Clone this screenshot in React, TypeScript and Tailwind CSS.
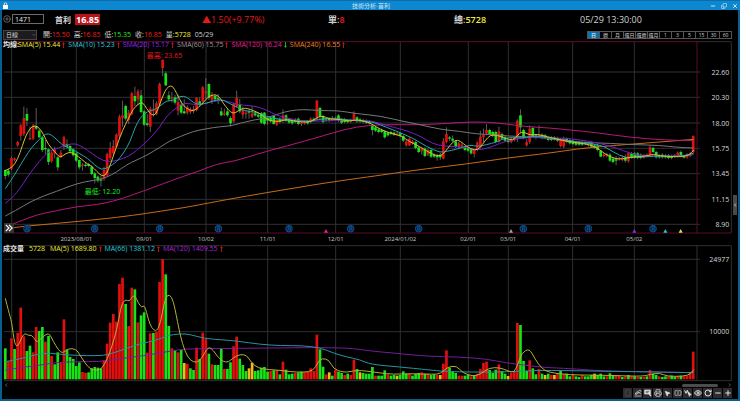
import React from "react";
import {
  ChevronDown,
  CirclePlus,
  Copy,
  Eye,
  Minus,
  MousePointer2,
  Plus,
  Printer,
  RotateCw,
  SquareSplitHorizontal,
  X,
} from "lucide-react";

const STEP = 9.254;
const FIRST = 16;
const VOLUME_BASE = 433;

// colour + [high, top, bottom, low], or colour + [top, bottom] for short wicks
const CANDLES = `
g358,360,378,388 g355,362,374,380 r324,356 r326,330 r276,286 r222,226,258,272 r170,204,252,258 g174,192,212,228
r230,264,268,270 r222,226,266,270 g174,228,236,240 g236,242,262,265 g260,262,300,306 g270,294,298,312 g296,298,336,345
r308,334 r290,298,310,325 g318,322,352,362 r300,308,322,324 r258,262,290,300 g268,282,290,296 g288,304 g298,316
g310,332 g328,330,352,358 r340,344,348,362 g336,344,347,352 g342,348 g350,372 g366,370,384,400 g376,380,392,398
g376,388,392,410 r350,360,386,392 r308,312,376,380 r276,294,324,330 r270,288,310,316 r254,290 r194,200,258,264
r152,196,204,230 g164,168,206,212 r180,188,210,222 r126,130,192,196 g110,138,154,168 r118,124,148,166 g120,136,186,190
g180,184,224,228 g192,220,225,230 r170,176,230,246 r148,180,184,200 r154,160,192,196 r98,102,164,168 r28,30,54,78
g64,70,106,108 g124,136,148,154 r126,142,146,158 g134,142,158,164 r134,156,182,196 g152,164,188,192 g148,184,190,192
r166,172,188,194 r172,180,186,192 r168,178,184,190 r142,144,180,184 g142,154,164,170 r108,112,154,160 r84,124,130,150
g100,102,144,150 r126,134,152,162 g132,138,148,156 g132,145,148,162 g172,184,196,198 r176,190,194,198 g174,184,196,200
g198,204,220,230 r158,162,214,218 r122,144,170,172 g146,162,184,190 r170,180,194,206 r180,188,191,206 g176,184,188,206
r168,190,200,204 g190,196 g194,200 g190,218 g186,188,222,226 g200,204,212,224 g204,214 g196,198,222,224 r210,224
g206,216 r178,196,212,218 g192,196,212,216 g208,218 g210,220 g204,212,216,220 g206,222 r214,218,222,228 r216,220
g214,220 r206,216 g206,210 r150,152,206,210 g170,174,200,208 g198,216 g208,212 g206,212 r198,206,210,214 r204,208
g196,212 g210,218 g208,216 g212,216 g210,214 r184,190,210,214 g202,214 g208,214 g210,216 g212,218 g214,220
g222,226,240,256 g232,242 g238,246 g240,246 g244,262 g248,256 g246,252 g248,254 r250,254 g250,258 g258,272 r274,286
r262,266,286,288 r274,280 g276,294 g292,306 r292,296,304,314 g296,318 r300,314 g300,320 g314,320 g312,316,322,332
g308,314,322,330 r264,274,326,328 r232,252,276,280 g258,262,266,274 g256,266,272,278 g274,290 r280,290 r284,290
g292,300 g294,302 g298,310 r298,300,312,322 r278,300 r242,260,292,294 r236,254,262,276 r222,240,250,256 g240,252
g246,258 g246,276 r230,244,276,278 g252,266 g262,272 g270,276 r266,276 r264,270 r208,212,262,276 g178,196,232,250
g240,264 r268,276,286,290 r226,236,276,282 g234,260 g256,264 r226,254,258,262 g254,264 g256,264 g262,270
g262,270 g262,268 g264,272 r268,288 r264,290 g266,276 g270,280 g272,282 g276,284 g276,284 g276,284 g276,282 r280,286
g278,290 g286,292 g286,300 g300,302,320,322 r314,318 r312,318 g314,332 g326,336 g318,328,332,346 r324,328
r316,326,330,334 g314,322,332,338 r310,334 g310,322 g310,322 g310,324 g314,324 r316,322 r314,318 r286,292,316,318
g294,306 g306,322 g316,322 g314,322 g316,322 g316,324 g318,324 r316,320 r304,308,320,322 g306,318 g319,322 r314,322
r310,318 r256,258,306,310`;

// colour + top of the bar
const VOLUMES = `
g340 r378 r310 g342 r294 r218 r304 g348 g332 r352 r276 g288 g276 r320 g303 r363 g388 g352 r382 r253 g343 g366 g372
g393 g382 r411 r414 g412 g400 g396 g398 g400 r376 r326 r263 r237 r260 r147 r128 g207 r273 r158 g163 r262 g241 g232
r353 r295 g294 r290 r141 r72 g118 g273 r340 g345 r352 g345 y384 r387 g400 g405 r338 g372 r293 r312 g356 r388 g390
g390 g340 r402 g402 g382 r334 r305 g371 g390 g408 y400 y383 g408 g406 g398 g396 g410 r408 g406 r406 g418 r380 g404
g418 g416 r414 g412 g410 r412 r410 r400 r408 r299 g343 g395 r418 y412 g422 r405 g410 g414 r420 g416 r420 r374 g402
y412 g414 g416 g416 g396 r422 g422 g422 g406 r418 g422 g420 y422 g420 g409 g416 r416 g422 g416 g414 r412 g416 r416
g420 g418 r420 y420 r386 r346 g398 g411 g414 r422 r422 g422 g420 r424 g420 r416 r402 r384 r380 g405 g414 g404 r388
g408 g416 y423 r414 r410 r264 g270 g378 g408 r376 g400 g418 r402 g416 y420 g416 r420 y420 r416 g408 r418 g416 g424
r418 g424 g426 r420 g424 g424 g420 y416 g420 g416 g424 r424 g415 g420 r420 r422 g426 r424 g420 r424 g424 r426 g426
r426 g424 r405 g416 g420 r424 g426 g424 r424 g422 g426 r424 g422 r424 r422 r414 r350`;

const PRICE_LINES = [
  {
    color: "#c96c18",
    points:
      "16,536 60,530 150,522 300,508 400,496 480,484 570,470 620,460 740,438 860,418 980,398 1110,380 1180,370 1280,356 1400,342 1520,324 1650,309 1730,297 1800,290 1900,282 1980,276 2081,268",
  },
  {
    color: "#b8187a",
    points:
      "16,530 60,514 110,494 170,482 230,470 290,464 340,454 400,434 460,412 520,390 570,372 600,362 650,342 700,334 740,322 800,304 860,288 940,266 1000,248 1070,230 1140,224 1200,224 1280,224 1340,220 1410,216 1460,216 1520,222 1580,230 1650,234 1710,240 1790,248 1890,262 1990,270 2081,272",
  },
  {
    color: "#777777",
    points:
      "16,498 50,480 90,456 130,438 170,424 210,408 250,396 290,390 320,382 350,366 380,344 410,330 440,316 480,292 510,272 540,260 580,244 620,236 660,230 690,228 720,220 760,210 800,204 840,190 870,182 910,178 960,182 1010,182 1040,186 1080,192 1140,198 1200,212 1260,224 1320,238 1380,244 1430,252 1480,254 1520,258 1580,260 1640,264 1680,270 1730,276 1770,278 1830,280 1900,284 1980,286 2030,292 2081,294",
  },
  {
    color: "#7420c4",
    points:
      "16,460 40,440 60,416 80,384 105,350 130,320 150,302 175,294 200,284 225,280 250,292 275,310 310,334 340,334 370,326 400,310 420,292 450,266 480,230 500,198 530,172 555,158 580,164 610,162 640,154 670,150 700,160 730,166 765,168 800,180 830,196 860,204 900,212 940,214 980,212 1040,210 1110,212 1140,220 1180,232 1220,242 1260,258 1300,282 1330,288 1370,290 1410,294 1430,300 1460,296 1500,280 1530,270 1560,266 1590,262 1640,264 1690,264 1740,270 1780,276 1830,288 1870,302 1910,316 1950,318 2030,318 2081,314",
  },
  {
    color: "#26a4a8",
    points:
      "16,416 35,388 55,356 75,322 95,292 120,266 137,250 155,254 175,274 195,290 215,296 240,312 262,324 285,346 305,360 325,352 350,336 370,310 390,276 405,232 420,204 435,190 450,182 470,176 485,164 500,152 520,152 540,138 560,140 580,158 595,164 620,160 640,152 665,148 680,156 700,166 725,180 750,184 780,190 800,200 830,206 860,212 910,214 940,212 970,206 1010,204 1040,210 1110,214 1140,224 1180,240 1210,252 1245,268 1280,290 1320,308 1340,304 1370,298 1410,284 1430,290 1460,284 1490,276 1520,262 1550,264 1580,262 1610,258 1640,262 1680,268 1730,276 1780,282 1810,288 1840,306 1875,324 1920,322 1960,318 2010,320 2050,318 2081,310",
  },
  {
    color: "#d6bd3a",
    points:
      "16,362 30,356 45,342 60,310 75,262 90,234 105,226 118,234 130,252 145,284 165,306 180,324 195,312 210,306 225,312 245,328 262,342 275,348 290,364 305,378 318,376 332,342 350,288 368,240 385,206 400,176 415,162 428,156 440,176 455,196 468,194 480,160 495,122 505,110 517,106 530,130 545,160 560,176 580,184 595,172 610,158 625,140 640,134 655,136 670,160 685,180 700,192 715,182 730,174 745,176 760,182 780,190 800,208 820,214 840,214 860,208 880,212 905,216 925,216 940,212 955,200 970,198 990,208 1020,208 1050,214 1070,208 1110,218 1130,232 1155,244 1180,252 1205,258 1230,276 1260,290 1285,306 1305,316 1322,318 1335,306 1350,286 1365,270 1380,272 1400,290 1425,302 1440,294 1455,272 1472,254 1490,256 1510,262 1530,270 1545,268 1558,248 1572,246 1590,256 1610,252 1640,260 1690,272 1730,278 1770,284 1795,296 1815,312 1835,322 1855,328 1880,324 1910,320 1940,318 1960,312 1980,318 2020,320 2050,320 2070,314 2081,300",
  },
];

const VOLUME_LINES = [
  {
    color: "#741c9c",
    points:
      "16,406 60,398 110,392 170,382 230,380 300,380 340,374 400,366 460,358 520,346 570,341 740,340 890,338 990,338 1060,340 1110,348 1180,354 1280,364 1380,366 1460,372 1520,384 1620,396 1650,398 1730,402 1810,408 1930,410 2081,413",
  },
  {
    color: "#2893a3",
    points:
      "16,380 60,372 110,358 150,354 200,360 260,362 310,362 340,354 380,340 420,326 470,316 500,302 540,296 570,298 610,310 660,314 710,318 780,328 840,332 910,332 960,338 1000,354 1040,366 1080,374 1110,388 1200,396 1280,404 1340,410 1480,412 1560,408 1650,406 1770,408 1900,410 2081,413",
  },
  {
    color: "#b5b037",
    points:
      "16,190 26,230 35,260 44,330 55,334 65,306 75,294 85,302 95,300 105,314 112,322 125,308 147,292 160,320 175,344 187,356 205,340 228,342 240,360 255,384 270,402 290,406 305,402 322,372 335,336 350,286 362,220 370,200 378,194 388,200 398,182 406,184 415,204 425,218 434,210 445,254 455,280 470,290 482,262 492,205 502,178 515,184 525,220 540,300 555,350 570,376 590,384 605,370 625,334 640,346 655,368 670,380 685,382 700,368 720,358 740,360 755,384 775,400 810,404 840,406 870,410 910,412 940,408 955,380 965,370 987,374 1000,402 1030,412 1050,410 1070,406 1100,408 1140,414 1180,418 1230,416 1300,418 1322,416 1342,396 1370,392 1388,414 1420,424 1440,418 1468,398 1500,398 1525,408 1542,414 1555,384 1565,354 1588,340 1605,372 1625,400 1645,412 1710,420 1780,420 1850,422 1930,424 1950,418 1980,414 2000,424 2050,424 2070,418 2081,404",
  },
];

const MONTHS = [
  { x: 35, label: "" },
  { x: 229, label: "2023/08/01" },
  { x: 433, label: "09/01" },
  { x: 618, label: "10/02" },
  { x: 803, label: "11/01" },
  { x: 1007, label: "12/01" },
  { x: 1201, label: "2024/01/02" },
  { x: 1405, label: "02/01" },
  { x: 1525, label: "03/01" },
  { x: 1718, label: "04/01" },
  { x: 1903, label: "05/02" },
];

const PRICES = [
  { y: 66, label: "22.60" },
  { y: 142, label: "20.30" },
  { y: 219, label: "18.00" },
  { y: 295, label: "15.75" },
  { y: 371, label: "13.45" },
  { y: 448, label: "11.15" },
  { y: 523, label: "8.90" },
];

const REPORTS = [81, 284, 479, 655, 867, 1052, 1256, 1570, 1765, 1959];

const EVENTS = [
  { x: 978, color: "#e0259b" },
  { x: 1533, color: "#a0a0a0" },
  { x: 1903, color: "#9327d8" },
  { x: 1996, color: "#25c8d8" },
  { x: 2042, color: "#e8e337" },
];

const SMA = [
  { text: "SMA(5) 15.44", up: true, className: "text-[#f0eb38]" },
  { text: "SMA(10) 15.23", up: true, className: "text-[#28cbdb]" },
  { text: "SMA(20) 15.17", up: true, className: "text-[#9327ec]" },
  { text: "SMA(60) 15.75", up: true, className: "text-[#9c9c9c]" },
  { text: "SMA(120) 16.24", up: false, className: "text-[#e0209a]" },
  { text: "SMA(240) 16.55", up: true, className: "text-[#f0841e]" },
];

const VOLUME_MA = [
  { text: "MA(5) 1689.80", up: true, className: "text-[#f0eb38]" },
  { text: "MA(66) 1381.12", up: true, className: "text-[#28cbdb]" },
  { text: "MA(120) 1409.55", up: true, className: "text-[#ab26d8]" },
];

const QUOTES = [
  { label: "開", value: "15.50", className: "text-[#f01c1c]" },
  { label: "高", value: "16.85", className: "text-[#f01c1c]" },
  { label: "低", value: "15.35", className: "text-[#20ea20]" },
  { label: "收", value: "16.85", className: "text-[#f01c1c]" },
  { label: "量", value: "5728", className: "text-[#f0eb38]" },
];

const PERIODS = ["日", "週", "月", "還日", "還週", "還月", "1", "3", "5", "15", "30", "60"];

const FILL: Record<string, string> = {
  r: "#e30f0f",
  g: "#17e317",
  y: "#f2b81c",
};

const parse = (source: string) =>
  source
    .trim()
    .split(/\s+/)
    .map((item, i) => ({
      x: FIRST + i * STEP,
      color: item[0],
      values: item.slice(1).split(",").map(Number),
    }));

const smooth = (points: string) => {
  const p = points.split(" ").map((pair) => pair.split(",").map(Number));
  let d = `M${p[0][0]} ${p[0][1]}`;
  for (let i = 1; i < p.length - 1; i++) {
    const mx = (p[i][0] + p[i + 1][0]) / 2;
    const my = (p[i][1] + p[i + 1][1]) / 2;
    d += ` Q${p[i][0]} ${p[i][1]} ${mx} ${my}`;
  }
  const last = p[p.length - 1];
  return `${d} L${last[0]} ${last[1]}`;
};

const Candles = () => (
  <>
    {parse(CANDLES).map(({ x, color, values }) => {
      const [high, top, bottom, low] =
        values.length === 4
          ? values
          : [values[0] - 4, values[0], values[1], values[1] + 4];
      return (
        <g key={x}>
          <line x1={x} x2={x} y1={high} y2={low} stroke="#8a8a8a" strokeWidth="2" />
          <rect x={x - 4} y={top} width="8" height={Math.max(bottom - top, 4)} fill={FILL[color]} />
        </g>
      );
    })}
  </>
);

const Lines = ({ lines }: { lines: { color: string; points: string }[] }) => (
  <>
    {lines.map((line) => (
      <path key={line.color} d={smooth(line.points)} fill="none" stroke={line.color} strokeWidth="3" />
    ))}
  </>
);

const PriceChart = () => (
  <svg viewBox="6 -27 2208 612" className="block w-full" role="img" aria-label="SMA">
    <g stroke="#303030" strokeWidth="3">
      {PRICES.map(({ y }) => (
        <line key={y} x1="12" x2="2100" y1={y} y2={y} />
      ))}
      {MONTHS.map(({ x }) => (
        <line key={x} x1={x} x2={x} y1="-24" y2="549" />
      ))}
      <line x1="2194" x2="2194" y1="-24" y2="549" />
      <line x1="2094" x2="2194" y1="-25" y2="-25" />
    </g>
    <g stroke="#5a0d2c" strokeWidth="3">
      <line x1="12" x2="2094" y1="-25" y2="-25" />
      <line x1="12" x2="2194" y1="549" y2="549" />
      <line x1="2091" x2="2091" y1="-25" y2="549" />
    </g>
    <Candles />
    <Lines lines={PRICE_LINES} />
    {REPORTS.map((x) => (
      <g key={x}>
        <circle cx={x} cy="536" r="10" fill="#041a33" stroke="#0f529a" strokeWidth="3" />
        <path
          d={`M${x - 3} 530v9q0 3-2 4M${x - 3} 530h7v13M${x - 3} 534h7M${x - 3} 538h7`}
          fill="none"
          stroke="#1160ad"
          strokeWidth="2"
        />
      </g>
    ))}
    {EVENTS.map(({ x, color }) => (
      <path key={x} d={`M${x} 537l6 11h-12z`} fill={color} />
    ))}
    <g fontSize="21">
      <text x="440" y="24" fill="#e81a1a">最高: 23.65</text>
      <text x="254" y="433" fill="#20ea20">最低: 12.20</text>
      {PRICES.map(({ y, label }) => (
        <text key={y} x="2188" y={y + 8} textAnchor="end" fill="#d6d6d6">
          {label}
        </text>
      ))}
    </g>
    <g fontSize="18" fill="#c8c8c8" textAnchor="middle">
      {MONTHS.map(({ x, label }) => (
        <text key={x} x={x} y="573">
          {label}
        </text>
      ))}
    </g>
  </svg>
);

const VolumeChart = () => (
  <svg viewBox="6 30 2208 411" className="block w-full" role="img" aria-label="成交量">
    <g stroke="#303030" strokeWidth="3">
      <line x1="12" x2="2194" y1="32" y2="32" />
      <line x1="12" x2="2100" y1="73" y2="73" />
      <line x1="12" x2="2100" y1="290" y2="290" />
      <line x1="12" x2="2194" y1="437" y2="437" />
      {MONTHS.map(({ x }) => (
        <line key={x} x1={x} x2={x} y1="32" y2="437" />
      ))}
      <line x1="2091" x2="2091" y1="32" y2="437" />
      <line x1="2194" x2="2194" y1="32" y2="437" />
    </g>
    {parse(VOLUMES).map(({ x, color, values }) => (
      <rect key={x} x={x - 4} y={values[0]} width="8" height={VOLUME_BASE - values[0]} fill={FILL[color]} />
    ))}
    <Lines lines={VOLUME_LINES} />
    <g fontSize="21" fill="#d6d6d6" textAnchor="end">
      <text x="2188" y="81">24977</text>
      <text x="2188" y="298">10000</text>
    </g>
  </svg>
);

interface LegendProps {
  items: { text: string; up: boolean; className: string }[];
  children: React.ReactNode;
}

const Legend: React.FC<LegendProps> = ({ items, children }) => (
  <div className="absolute top-0 left-px flex h-2 items-center gap-[3px] whitespace-nowrap text-[7px] leading-[8px]">
    {children}
    {items.map(({ text, up, className }) => (
      <span key={text} className={`flex gap-0.5 ${className}`}>
        {text}
        <svg viewBox="0 0 3 8" className={`h-2 w-[3px] ${up ? "text-[#e01b1b]" : "rotate-180 text-[#1fd81f]"}`}>
          <path d="M1.5 7V2M.4 3.2 1.5 1.6l1.1 1.6" fill="none" stroke="currentColor" strokeWidth=".8" />
        </svg>
      </span>
    ))}
  </div>
);

const Chevron = ({ right = false }: { right?: boolean }) => (
  <svg viewBox="0 0 6 8" className={`h-1 w-[3px] ${right ? "rotate-180" : ""}`}>
    <path d="M4 1 1 4l3 3" fill="none" stroke="currentColor" strokeWidth="1.5" />
  </svg>
);

const TOOLS: { label: string; icon: React.ReactNode; drawn?: boolean }[] = [
  { label: "Page", drawn: true, icon: <path d="M5 3h9l4 4v14H5z" stroke="#555" /> },
  {
    label: "Draw",
    drawn: true,
    icon: <path d="M2 21h20M3 16c5-9 8-11 10-8s-3 8-7 8 1-4 6-5 8 5 10 4M13 7l5-4 3 4-5 5" />,
  },
  {
    label: "Table",
    drawn: true,
    icon: (
      <>
        <path d="M2 3h17v12H2z" fill="currentColor" />
        <path d="M5 7h11M5 11h8" stroke="#303030" />
        <path d="M15 14l6 7" strokeWidth="4" />
      </>
    ),
  },
  { label: "Print", icon: <Printer className="size-2" /> },
  { label: "Pointer", icon: <MousePointer2 className="size-[7px]" fill="currentColor" /> },
  { label: "Split", icon: <SquareSplitHorizontal className="size-2" /> },
  {
    label: "Select line",
    drawn: true,
    icon: (
      <>
        <path d="M2 4l4 9 4-9 4 12" strokeWidth="3" />
        <path d="M13 9l9 8-4 .5L16 22z" fill="currentColor" />
      </>
    ),
  },
  { label: "View", icon: <Eye className="size-2" strokeWidth={3} /> },
  { label: "Reload", icon: <RotateCw className="size-2" strokeWidth={3} /> },
  { label: "Zoom out", icon: <Minus className="size-2" strokeWidth={3} /> },
  { label: "Zoom in", icon: <Plus className="size-2" strokeWidth={3} /> },
];

const TitleBar = () => (
  <header className="grid h-[10px] grid-cols-3 items-center border-t border-[#0b6ea8] bg-[#0d87cf] pr-px pl-[3px] text-white">
    <svg viewBox="0 0 10 14" className="h-[7px] w-[5px]">
      <path d="M2.500 7V4a2.500 2.500 0 0 1 5 0v3" fill="none" stroke="currentColor" strokeWidth="1.500" />
      <rect y="6" width="10" height="8" fill="currentColor" />
    </svg>
    <h1 className="text-center text-[6px] leading-[8px] text-[#cfe6f5]">技術分析-首利</h1>
    <div className="flex justify-end gap-1">
      <button aria-label="Minimize">
        <Minus className="size-[6px]" strokeWidth={3} />
      </button>
      <button aria-label="Restore" className="mx-px">
        <Copy className="size-[6px] -scale-x-100 rotate-180" strokeWidth={2} />
      </button>
      <button aria-label="Close" className="mr-px">
        <X className="size-[6px]" strokeWidth={3} />
      </button>
    </div>
  </header>
);

const Summary = () => (
  <div className="grid h-[18px] grid-cols-[200px_1fr_1fr_1fr_1fr] items-center pr-8 text-[9px] leading-[11px] text-[#d0d0d0]">
    <div className="flex items-center">
      <button aria-label="Add" className="ml-px">
        <CirclePlus className="size-2 text-[#8a8a8a]" />
      </button>
      <input
        aria-label="Symbol"
        defaultValue="1471"
        className="ml-px h-[10px] w-8 border border-[#6b6b6b] bg-black pl-0.5 text-[7px] leading-[8px] text-[#e6e6e6]"
      />
      <span className="ml-[11px] w-5 text-[8px] font-semibold">首利</span>
      <strong className="bg-[#b81318] px-px text-white">16.85</strong>
    </div>
    <div className="text-[#e01a1a]">▲1.50(+9.77%)</div>
    <div className="font-semibold">
      單:<span className="text-[#f01c1c]">8</span>
    </div>
    <div className="font-semibold">
      總:<span className="text-[#f0eb38]">5728</span>
    </div>
    <time className="whitespace-nowrap">05/29 13:30:00</time>
  </div>
);

const QuoteBar = () => (
  <div className="flex h-[13px] items-center pr-[6px] pl-px text-[7px] leading-[9px] text-[#d0d0d0]">
    <div className="relative mr-[6px]">
      <select
        aria-label="Period"
        className="block h-[10px] w-[34px] appearance-none border border-[#444] bg-[#1c1c1c] pl-0.5 text-[6px] leading-[8px]"
      >
        <option>日線</option>
      </select>
      <ChevronDown className="pointer-events-none absolute top-[3px] right-px size-1" />
    </div>
    <div className="flex gap-1">
      {QUOTES.map(({ label, value, className }) => (
        <span key={label}>
          {label}:<span className={className}>{value}</span>
        </span>
      ))}
      <time>05/29</time>
    </div>
    <div className="ml-auto flex border-l border-[#555] text-[5px] leading-[7px]">
      {PERIODS.map((period, i) => (
        <button
          key={period}
          className={`h-2 w-3 whitespace-nowrap border-y border-r border-[#555] ${i === 0 ? "bg-[#0f6fa8] text-white" : ""}`}
        >
          {period}
        </button>
      ))}
    </div>
  </div>
);

const ScrollBar = () => (
  <div className="flex h-[6px] items-center justify-between pr-[7px] pl-[3px] text-[#777]">
    <Chevron />
    <div className="mr-[10px] ml-auto h-[3px] w-9 rounded-full bg-[#4c4c4c]" />
    <Chevron right />
  </div>
);

const Toolbar = () => (
  <div className="flex justify-end gap-px pr-[6px] pb-px">
    {TOOLS.map(({ label, icon, drawn }) => (
      <button
        key={label}
        aria-label={label}
        className="flex h-[10px] w-[9px] items-center justify-center bg-[#2c2c2c] text-[#e2e2e2]"
      >
        {drawn ? (
          <svg viewBox="0 0 24 24" className="size-2" fill="none" stroke="currentColor" strokeWidth="2">
            {icon}
          </svg>
        ) : (
          icon
        )}
      </button>
    ))}
  </div>
);

export default function App() {
  return (
    <main className="flex min-h-screen flex-col border-b-2 border-[#075e8f] bg-black font-['Open_Sans','Noto_Sans_CJK_TC',sans-serif]">
      <TitleBar />
      <div className="flex-1 border-x-2 border-[#075e8f]">
        <Summary />
        <QuoteBar />
        <section className="relative">
          <PriceChart />
          <Legend items={SMA}>
            <span className="-mr-1 font-bold text-[#e0e0e0]">均線:</span>
          </Legend>
          <button
            aria-label="Expand"
            className="absolute bottom-3 left-0.5 flex size-[10px] items-center justify-center bg-[#333] text-white"
          >
            <svg viewBox="0 0 10 10" className="size-2" fill="none" stroke="currentColor" strokeWidth="1.5">
              <path d="M1 1l4 4-4 4M5 1l4 4-4 4" />
            </svg>
          </button>
          <button
            aria-label="Panel"
            className="absolute right-px bottom-[30px] flex h-5 w-1 items-center justify-center bg-[#4a4a4a] text-[#ddd]"
          >
            <Chevron />
          </button>
        </section>
        <section className="relative">
          <VolumeChart />
          <Legend items={VOLUME_MA}>
            <span className="mr-0.5 font-bold text-[#e0e0e0]">成交量</span>
            <span className="mr-0.5 text-[#f0eb38]">5728</span>
          </Legend>
        </section>
        <ScrollBar />
        <Toolbar />
      </div>
    </main>
  );
}
